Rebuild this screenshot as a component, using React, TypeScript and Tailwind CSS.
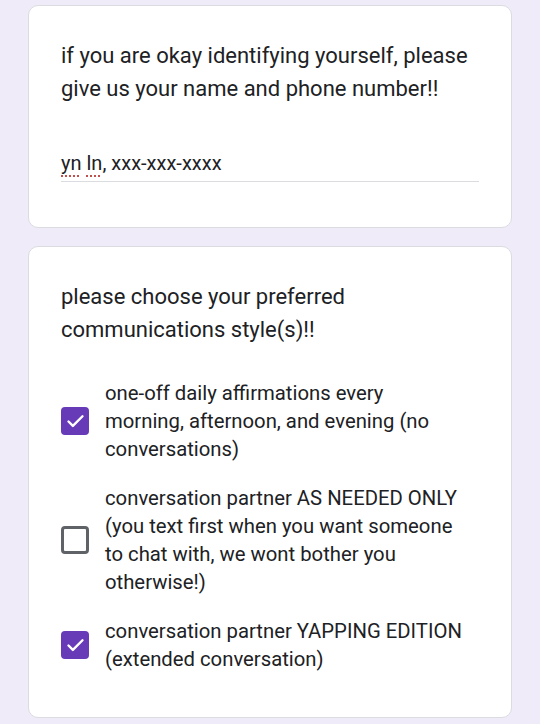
import { Check } from 'lucide-react';

const options = [
    { label: 'one-off daily affirmations every morning, afternoon, and evening (no conversations)', checked: true },
    { label: 'conversation partner AS NEEDED ONLY (you text first when you want someone to chat with, we wont bother you otherwise!)', checked: false },
    { label: 'conversation partner YAPPING EDITION (extended conversation)', checked: true },
];

function Box({ checked }: { checked: boolean }) {
    if (checked) {
        return (
            <div className="w-[28px] h-[28px] shrink-0 rounded-[4px] bg-[#673ab7] flex items-center justify-center">
                <Check className="w-[21px] h-[21px] text-white" strokeWidth={2.75} />
            </div>
        );
    }
    return <div className="w-[28px] h-[28px] shrink-0 rounded-[4px] border-[3px] border-[#5f6368]" />;
}

export default function App() {
    return (
        <div
            className="min-h-[724px] bg-[#f0ebf8] px-[28px] pt-[5px] text-[#202124]"
            style={{ fontFamily: 'Roboto, "Noto Sans", sans-serif' }}
        >
            <div className="bg-white rounded-[10px] border border-[#dadce0] px-[32px] pt-[33px] pb-[45px]">
                <p className="text-[22px] leading-[33px]">
                    if you are okay identifying yourself, please give us your name and phone number!!
                </p>
                <div className="mt-[44px] border-b border-[#dadce0] pb-[4px]">
                    <span className="text-[20px] leading-[28px]">
                        <span className="underline decoration-dotted decoration-[#c0504d] underline-offset-[5px]">yn</span>{' '}
                        <span className="underline decoration-dotted decoration-[#c0504d] underline-offset-[5px]">ln</span>, xxx-xxx-xxxx
                    </span>
                </div>
            </div>

            <div className="mt-[18px] bg-white rounded-[10px] border border-[#dadce0] px-[32px] pt-[33px] pb-[44px]">
                <p className="text-[22px] leading-[33px] pr-[120px]">
                    please choose your preferred communications style(s)!!
                </p>
                <div className="mt-[33px] flex flex-col gap-[21px]">
                    {options.map((o) => (
                        <div key={o.label} className="flex items-center gap-[16px]">
                            <Box checked={o.checked} />
                            <span className="w-[359px] text-[20.3px] leading-[28px]">{o.label}</span>
                        </div>
                    ))}
                </div>
            </div>
        </div>
    );
}
